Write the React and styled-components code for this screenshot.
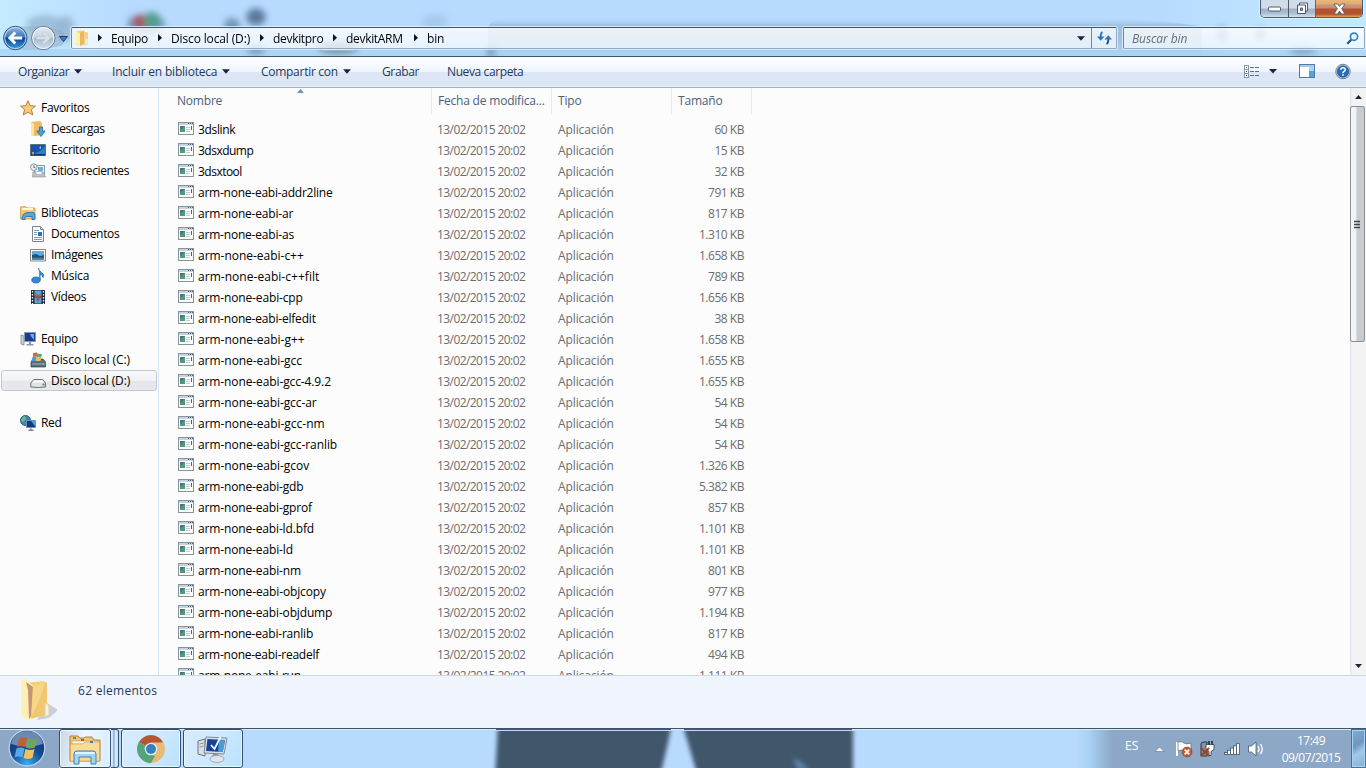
import React from 'react';
import styled, { createGlobalStyle } from 'styled-components';

const Global = createGlobalStyle`
  * { box-sizing: border-box; }
  body { margin: 0; background: #b8daff; overflow: hidden; }
  svg { display: block; flex: none; }
`;

const Screen = styled.div`
  width: 1366px;
  height: 768px;
  display: flex;
  flex-direction: column;
  overflow: hidden;
  font: 12px/21px 'Open Sans', 'Noto Sans', sans-serif;
  letter-spacing: -0.2px;
  color: #000;
  white-space: nowrap;
`;

/* ---------- window frame ---------- */
const Frame = styled.header`
  position: relative;
  height: 57px;
  flex: none;
  display: flex;
  flex-direction: column;
  border-bottom: 1px solid #3f5468;
  background: linear-gradient(90deg, #c4ebff 0, #b8daff 130px, #b8daff 1160px, #bfe6ff 1290px, #c0eaff 100%);
`;
const Backdrop = styled.svg`
  position: absolute;
  left: 0;
  top: 0;
`;
const CaptionBar = styled.div`
  position: relative;
  height: 27px;
  display: flex;
  justify-content: flex-end;
  align-items: flex-start;
  padding-right: 3px;
`;
const Caption = styled.div`
  display: flex;
  height: 18px;
  border: 1px solid #4d5b70;
  border-top: 0;
  border-radius: 0 0 5px 5px;
  overflow: hidden;
  box-shadow: 0 0 0 1px #d9f0ff;
`;
const CaptionButton = styled.div`
  width: ${p => p.$w}px;
  display: flex;
  align-items: center;
  justify-content: center;
  border-left: ${p => (p.$first ? 0 : '1px solid ' + (p.$close ? '#b04a2a' : '#4d5b70'))};
  background: ${p =>
    p.$close
      ? 'linear-gradient(#e9b878 0, #e2ab6c 4px, #c99580 5px, #c08a78 8px, #b4532c 9px, #b4532c 14px, #e2a35f 17px)'
      : 'linear-gradient(#cfdcea 0, #d3dde8 8px, #9fb2c7 9px, #a9bccf 13px, #cfe2f2 17px)'};
`;
const NavBar = styled.div`
  position: relative;
  height: 22px;
  display: flex;
  align-items: center;
`;
const NavButtons = styled.div`
  width: 71px;
  height: 28px;
  flex: none;
`;
const FieldBox = styled.div`
  height: 22px;
  display: flex;
  align-items: center;
  border: 1px solid #8fa9c6;
  border-top-color: #3f5468;
  border-left-color: #71859b;
  border-radius: 2px;
  box-shadow: 0 0 0 1px rgba(225, 242, 255, 0.8);
  background: linear-gradient(rgba(255, 255, 255, 0.8), rgba(244, 250, 255, 0.76));
`;
const Address = styled(FieldBox)`
  width: 1046px;
  padding-left: 3px;
  margin-right: 6px;
`;
const Crumbs = styled.div`
  display: flex;
  flex: 1;
  margin-left: 9px;
`;
const Crumb = styled.div`
  width: ${p => p.$w}px;
  display: flex;
  align-items: center;
  gap: 9px;
  letter-spacing: ${p => p.$ls}px;
`;
const RefreshCell = styled.div`
  width: 25px;
  height: 20px;
  margin-left: 6px;
  border-left: 1px solid #71859b;
  display: flex;
  align-items: center;
  justify-content: center;
`;
const Search = styled(FieldBox)`
  width: 242px;
  padding: 0 5px 0 8px;
  justify-content: space-between;
  font-style: italic;
  color: #66707c;
  letter-spacing: -0.1px;
`;

/* ---------- command bar ---------- */
const Commands = styled.nav`
  height: 31px;
  flex: none;
  display: flex;
  align-items: center;
  padding: 0 15px 1px 18px;
  color: #1e395b;
  border-bottom: 1px solid #9ab2cb;
  box-shadow: inset 0 -1px #e6f1fb;
  background: linear-gradient(#ffffff 0, #eef5ff 15px, #dce6f4 15px, #dce6f4 100%);
`;
const Command = styled.div`
  width: ${p => p.$w}px;
  display: flex;
  align-items: center;
  gap: 5px;
  letter-spacing: ${p => p.$ls}px;
`;
const CommandTools = styled.div`
  margin-left: auto;
  display: flex;
  align-items: center;
`;

/* ---------- body ---------- */
const Body = styled.div`
  height: 587px;
  flex: none;
  display: flex;
  overflow: hidden;
  background: #fcfcfc;
`;
const Sidebar = styled.aside`
  width: 159px;
  flex: none;
  padding: 9px 1px 0;
  border-right: 1px solid #d6e5f5;
`;
const Group = styled.div`
  margin-bottom: 21px;
`;
const Place = styled.div`
  height: 21px;
  display: flex;
  align-items: center;
  gap: 5px;
  padding-left: ${p => (p.$nested ? 28 : 18)}px;
  border: 1px solid ${p => (p.$selected ? '#c3c8d0' : 'transparent')};
  border-radius: 3px;
  background: ${p => (p.$selected ? 'linear-gradient(#f8f8f8, #f1f2f4 50%, #e4e6ec 55%, #e6e8ec)' : 'none')};
  letter-spacing: ${p => p.$ls}px;
`;
const List = styled.main`
  width: 1191px;
  flex: none;
`;
const Columns = styled.div`
  display: grid;
  grid-template-columns: 273px 120px 120px 80px;
`;
const HeadRow = styled(Columns)`
  height: 31px;
  color: #4c607a;
`;
const HeadCell = styled.div`
  position: relative;
  height: 26px;
  padding-left: ${p => p.$pad || 6}px;
  line-height: 26px;
  border-right: 1px solid #e3ecf6;
`;
const SortMark = styled.svg`
  position: absolute;
  left: 138px;
  top: 1px;
`;
const FileRow = styled(Columns)`
  height: 21px;
  color: #6d6d6d;
`;
const FileName = styled.div`
  display: flex;
  gap: 4px;
  padding-left: 19px;
  color: #000;
  letter-spacing: ${p => p.$ls}px;
  svg { margin-top: 3px; }
`;
const DateCell = styled.div`
  padding-left: 5px;
  letter-spacing: -0.57px;
`;
const TypeCell = styled.div`
  padding-left: 6px;
  letter-spacing: -0.1px;
`;
const SizeCell = styled.div`
  padding-right: 8px;
  text-align: right;
  letter-spacing: -0.47px;
`;
const Scroll = styled.div`
  width: 16px;
  display: flex;
  flex-direction: column;
  background: linear-gradient(90deg, #e3e8ee 1px, #f3f3f3 2px);
`;
const ScrollArrow = styled.div`
  height: 18px;
  display: flex;
  align-items: center;
  justify-content: center;
`;
const Thumb = styled.div`
  width: 15px;
  height: 236px;
  border: 1px solid #8b9097;
  border-radius: 2px;
  display: flex;
  align-items: center;
  padding-left: 3px;
  background: linear-gradient(90deg, #f5f5f5 0, #f0f1f2 5px, #c6cbd0 6px, #c8cdd1 100%);
`;
const Track = styled.div`
  flex: 1;
`;
const Details = styled.footer`
  height: 53px;
  flex: none;
  display: flex;
  padding-left: 19px;
  gap: 21px;
  color: #1e395b;
  border-top: 1px solid #cbdaea;
  background: #f0f4fc;
`;
const DetailsText = styled.div`
  padding-top: 4px;
  letter-spacing: 0.28px;
`;

/* ---------- taskbar ---------- */
const Taskbar = styled.div`
  position: relative;
  height: 40px;
  flex: none;
  display: flex;
  border-top: 1px solid #3f5468;
  box-shadow: inset 0 1px #d6ecff;
  background: linear-gradient(90deg, #8da8c6 0, #8da8c6 59px, #b8daff 59px, #b8daff 1076px, #a9d3f5 1088px, #8da8c6 1112px, #8da8c6 100%);
`;
const StartButton = styled.div`
  position: relative;
  width: 59px;
  padding: 0 0 0 8px;
`;
const TaskButton = styled.div`
  position: relative;
  width: ${p => p.$w}px;
  height: 39px;
  margin-right: ${p => p.$gap ?? 2}px;
  display: flex;
  align-items: center;
  justify-content: center;
  border: 1px solid #35506d;
  border-radius: 3px;
  box-shadow: inset 0 0 0 1px #e9f8ff;
  background: ${p =>
    p.$active
      ? 'linear-gradient(100deg, #c9d7e6, #eef6ff 45%, #d7edff)'
      : 'linear-gradient(120deg, #d8ebfc, #cfe8ff 50%, #b9e2fd)'};
`;
const StackEdge = styled.div`
  position: relative;
  width: 8px;
  height: 39px;
  margin-right: 2px;
  border: 1px solid #35506d;
  border-left: 0;
  border-radius: 0 3px 3px 0;
  background: linear-gradient(90deg, #e4f3ff 0, #c3dcf3 2px, #7896b4 3px, #d5ebff 4px, #c5e3fb 100%);
`;
const Tray = styled.div`
  position: relative;
  margin-left: auto;
  display: flex;
  color: #fff;
`;
const Language = styled.div`
  padding-top: 6px;
  width: 22px;
  letter-spacing: 0;
`;
const Clock = styled.div`
  width: 80px;
  padding-top: 3px;
  text-align: center;
  line-height: 17px;
  letter-spacing: -0.5px;
`;
const ShowDesktop = styled.div`
  width: 15px;
  height: 39px;
  border: 1px solid #4c7090;
  box-shadow: inset 0 0 0 1px #a7d3f3;
  background: linear-gradient(145deg, #86abd0, #6e98c2 40%, #a3c8ea 60%, #7fb0d9);
`;

/* ---------- drawings ---------- */
const Down = ({ w = 8, c = '#241e4e' }) => (
  <svg width={w} height="5" viewBox="0 0 8 5"><path d="M0 .3h8L4 4.8z" fill={c} /></svg>
);
const Right = () => (
  <svg width="4" height="8" viewBox="0 0 4 8"><path d="M0 0v7.500L4 3.800z" fill="#111" /></svg>
);

const FrameBackdrop = () => (
  <Backdrop width="1366" height="56">
    <defs>
      <filter id="soft" x="-40%" y="-40%" width="180%" height="180%"><feGaussianBlur stdDeviation="3" /></filter>
      <linearGradient id="band" x1="0" x2="0" y1="0" y2="1">
        <stop offset="0" stopColor="#a9d3f5" stopOpacity="0" /><stop offset=".2" stopColor="#9fc0df" /><stop offset=".5" stopColor="#a0c0de" /><stop offset="1" stopColor="#a9d3f5" />
      </linearGradient>
    </defs>
    <path d="M488 27q5-9 14-9h590q80 2 110 9v29H488z" fill="url(#band)" />
    <path d="M0 49h1366v7H0z" fill="#a9d3f5" opacity=".8" />
    <g filter="url(#soft)">
      <ellipse cx="45" cy="24" rx="19" ry="9" fill="#93b5d2" opacity=".8" />
      <ellipse cx="66" cy="29" rx="9" ry="13" fill="#8dadc8" opacity=".7" />
      <ellipse cx="146" cy="24" rx="19" ry="10" fill="#5f86a2" opacity=".75" />
      <circle cx="140" cy="22" r="7" fill="#a65560" />
      <circle cx="152" cy="20" r="8" fill="#519f8d" />
      <ellipse cx="256" cy="17" rx="10" ry="9" fill="#5c82a8" />
      <circle cx="256" cy="16" r="3" fill="#6b5a66" />
      <ellipse cx="232" cy="25" rx="8" ry="7" fill="#7194b7" />
      <ellipse cx="256" cy="50" rx="9" ry="4" fill="#7194b7" />
      <ellipse cx="338" cy="48" rx="20" ry="6" fill="#7893a6" />
      <ellipse cx="435" cy="22" rx="13" ry="8" fill="#9dc0e0" opacity=".6" />
      <path d="M487 46h8v12h-8z" fill="#7fa3c5" />
      <ellipse cx="1222" cy="34" rx="5" ry="8" fill="#7fa3c5" />
      <ellipse cx="1260" cy="34" rx="5" ry="6" fill="#7fa3c5" />
      <ellipse cx="1303" cy="51" rx="14" ry="4" fill="#84a8c8" />
    </g>
    <path d="M322 49.500h32" stroke="#ded6b0" strokeWidth="2" opacity=".8" />
  </Backdrop>
);

const NavDrawing = () => (
  <svg width="71" height="28" viewBox="0 24 71 28">
    <defs>
      <linearGradient id="bk" x1="0" x2="0" y1="0" y2="1">
        <stop offset="0" stopColor="#9bbbe0" /><stop offset=".45" stopColor="#3c79bd" /><stop offset=".5" stopColor="#0c3d90" /><stop offset="1" stopColor="#3aa4e6" />
      </linearGradient>
      <linearGradient id="fw" x1="0" x2="0" y1="0" y2="1">
        <stop offset="0" stopColor="#e4ebf1" /><stop offset=".48" stopColor="#cbd5df" /><stop offset=".52" stopColor="#aab9c8" /><stop offset="1" stopColor="#d1e1ee" />
      </linearGradient>
    </defs>
    <path d="M14 26.500h30l18 4q6 7 0 15l-18 4H14z" fill="#86a2bd" opacity=".45" />
    <circle cx="15.300" cy="38" r="11.700" fill="url(#bk)" stroke="#31597f" />
    <circle cx="15.300" cy="38" r="10.600" fill="none" stroke="#cce5fb" strokeWidth=".9" />
    <path d="M7.800 38l6.500-6.500 2 2-2.800 2.900h8.700v3.200h-8.700l2.800 2.900-2 2z" fill="#fff" />
    <circle cx="43.300" cy="38" r="11.700" fill="url(#fw)" stroke="#627a91" />
    <circle cx="43.300" cy="38" r="10.600" fill="none" stroke="#eff7ff" />
    <path d="M50.800 38l-6.500-6.500-2 2 2.800 2.900h-8.700v3.200h8.700l-2.800 2.900 2 2z" fill="#d9e1e8" stroke="#b4c1cd" strokeWidth=".6" />
    <path d="M59.500 36.500h8l-4 5z" fill="#3586cd" stroke="#1b3b70" />
  </svg>
);

const FolderSmall = () => (
  <svg width="14" height="17" viewBox="0 0 14 17">
    <path d="M1 1l8-.5 1 1.500 3 .5v12l-8 1-4-1z" fill="#f5d27d" />
    <path d="M1 1l4 2v13l-4-2z" fill="#fff0a8" /><path d="M5 3l4-2v13l-4 2z" fill="#e9b860" />
    <path d="M10.500 9h2v5h-2z" fill="#eaf6ff" />
  </svg>
);

const AppIcon = () => (
  <svg width="16" height="13" viewBox="0 0 16 13">
    <rect x=".5" y=".5" width="15" height="12" fill="#fff" stroke="#8a929c" />
    <path d="M1 1h14v2H1z" fill="#c5d3e1" /><path d="M10 1h1v1h-1zM12 1h1v1h-1zM14 1h1v1h-1z" fill="#42607c" />
    <path d="M2 4h5v6H2z" fill="#4d9b7a" /><path d="M2 4h5L2 8z" fill="#4a7388" />
    <path d="M8 5.500h4M8 7.500h4M8 9.500h4" stroke="#c5ccd1" /><path d="M13.500 4v4" stroke="#4c6070" />
  </svg>
);

const icons = {
  star: <path d="M8 .7l2.100 5 5.300.4-4 3.500 1.400 5.400L8 12.100 3.200 15l1.400-5.400-4-3.500 5.300-.4z" fill="#f7ce75" stroke="#b86d35" strokeWidth=".9" />,
  downloads: <><path d="M1 1l9-1 2 2v12l-7 1-4-1z" fill="#efbc65" /><path d="M1 1l3 2v12l-3-1z" fill="#ffe69a" /><path d="M9.500 6h3v4h2.700L11 15.500 6.800 10h2.700z" fill="#4ba2e3" stroke="#24649f" strokeWidth=".8" /></>,
  desktop: <><path d="M.5 2.500h15v11H.5z" fill="#1d50a8" stroke="#5b7082" /><path d="M5 11q6-1 10-7v8H5z" fill="#2d80cd" /><path d="M1 12h14v1.500H1z" fill="#153463" /><path d="M2 10h2v2.500H2z" fill="#8fb070" /><path d="M9 6l2-2v3z" fill="#a0daf5" /></>,
  recent: <><path d="M4.500 2.500h10v9h-10z" fill="#eef6fb" stroke="#7f98ab" /><path d="M8 4h5v4H8z" fill="#70abd9" /><path d="M3 9h10l2.500 5h-13z" fill="#bbc2c9" stroke="#888f96" strokeWidth=".6" /><path d="M6 8.500h6v3H6z" fill="#f7fbfd" stroke="#9aa8b2" strokeWidth=".6" /><circle cx="3.800" cy="4.200" r="3.300" fill="#eef2f4" stroke="#87939d" /><path d="M3.800 2.400v2l1.600.4" stroke="#2d4c65" fill="none" strokeWidth=".8" /></>,
  libs: <><path d="M.5 2l5-.5 1.500 1.500h8v11H.5z" fill="#f2c878" stroke="#c58a3e" strokeWidth=".7" /><path d="M2 3h11v2H2z" fill="#fff6ce" /><path d="M2 14.500q0-7 6-7h5q2 0 2 3v4h-3v-3H6q-1 0-1 3z" fill="#58a4dc" stroke="#286da7" strokeWidth=".8" /></>,
  docs: <><path d="M2.500.5h8l3 3v12h-11z" fill="#fff" stroke="#7a868f" /><path d="M10.500 .5v3h3" fill="#d7e0e7" stroke="#7a868f" /><path d="M4 4.500h5M4 6.500h3M4 8.500h3M4 11.500h8M4 13.500h8" stroke="#7b9faf" /><path d="M8 6h4v4H8z" fill="#2d70b6" /></>,
  images: <><path d="M.5 2.500h15v11.500H.5z" fill="#fff" stroke="#7d8790" /><path d="M2 4h12v8.500H2z" fill="#5eade3" /><path d="M2 8l4-1 4 2 4-1v4.500H2z" fill="#274f66" /><path d="M2 10.500h12v2H2z" fill="#3b80ad" /></>,
  music: <><path d="M8.500 0q0 3 3 4.500t1.500 5q0-3-3-3.500V12" fill="#3d91d8" stroke="#276ca9" /><ellipse cx="6" cy="12" rx="4.300" ry="3" fill="#2e86d4" stroke="#2169a8" strokeWidth=".7" /></>,
  video: <><path d="M1 1h14v14H1z" fill="#1e2740" /><path d="M4.500 1.500h7v6h-7zM4.500 8.500h7v6h-7z" fill="#53a8dc" /><path d="M4.500 4l4 2 3-2v3.500h-7z" fill="#b5603f" /><path d="M6 8.500h4l-1 4H7z" fill="#a65b45" /><path d="M2.500 2v13M13.500 2v13" stroke="#fff" strokeDasharray="1.500 1.500" strokeWidth="1.300" /></>,
  pc: <><path d="M1 4l3 1v9l-3-1z" fill="#cbd3d8" stroke="#6d7b86" strokeWidth=".7" /><path d="M4.500 1.500h11v9h-11z" fill="#173e94" stroke="#8d9aa5" /><path d="M10 3h4v6q-3-3-4-6z" fill="#65b1e8" /><path d="M9 11h2v2h2.500v1.500h-7V13H9z" fill="#8c99a4" /></>,
  driveC: <><path d="M1 10l2-3h10l2.500 3v5H1z" fill="#5a6d7c" stroke="#304352" strokeWidth=".7" /><path d="M2 12h10" stroke="#a1b2bf" /><path d="M12.500 11h2v2h-2z" fill="#76c494" /><path d="M3 1l4-.5v4L3 5z" fill="#c9693d" /><path d="M7 1.500l5 .5-1 4H6.500z" fill="#57ab84" /><path d="M2.500 5h4l-1 4h-4z" fill="#4f9ad7" /><path d="M6.500 5h5l-1 4h-5z" fill="#eebb64" /></>,
  driveD: <><path d="M.8 10l3-3.500h9l2.700 3.500v4q-7 1-14.700 0z" fill="#dfe3e5" stroke="#6d7478" /><path d="M2 9.500l2-2h8l2 2z" fill="#fafafa" /><path d="M12.500 10.500h2v2h-2z" fill="#529567" /></>,
  net: <><circle cx="5.500" cy="5.500" r="5" fill="#3689bf" stroke="#245c85" /><path d="M2 3q2-2 3-2l1 3-3 3-2-1zM6 6h3v4H6z" fill="#75b982" /><path d="M6.500 5.500h9v7h-9z" fill="#12388c" stroke="#7890a6" /><path d="M11 6h4v5z" fill="#4aa3e1" /><path d="M10.500 13h1v1.500h2V16H8.500v-1.500h2z" fill="#75838f" /></>,
};
const SideIcon = ({ name }) => <svg width="16" height="16" viewBox="0 0 16 16">{icons[name]}</svg>;

const BigFolder = () => (
  <svg width="38" height="48" viewBox="0 -2 38 48">
    <path d="M28 25l11 7-9 8-12 2z" fill="#b7c1d1" opacity=".7" />
    <path d="M6 5l19-2 3 3v30L12 41 5 36z" fill="#f6d078" />
    <path d="M2 2l5-1 8 8v28l-5 6-8-6z" fill="#fff0b6" />
    <path d="M7 4l7 5v27l-4 5-1-29z" fill="#c49570" />
    <path d="M14 8l12-4q2 0 2 3v30l-16 3z" fill="#f1c673" />
    <path d="M14 8l12-4q-4 16-14 36z" fill="#f9db93" opacity=".7" />
    <path d="M26 25q4 0 4 5v7l-4 2z" fill="#e9f1f8" stroke="#f1cf82" />
  </svg>
);

const TaskWallpaper = () => (
  <Backdrop width="1366" height="39">
    <defs><filter id="edge"><feGaussianBlur stdDeviation="2" /></filter><clipPath id="bar"><path d="M0 2h1366v37H0z" /></clipPath></defs>
    <path d="M496 0h175M684 0h168" stroke="#241e55" strokeWidth="1.500" />
    <g clipPath="url(#bar)"><g filter="url(#edge)" fill="#41576b">
      <path d="M498-6h174l-4 20-8 34H495z" /><path d="M682-6h171v54H698l-10-34z" />
      <path d="M793 28l16 12h-11z" fill="#5f88af" />
    </g></g>
  </Backdrop>
);

const StartOrb = () => (
  <svg width="38" height="39" viewBox="0 0 38 39">
    <defs><radialGradient id="orb" cx=".5" cy=".95" r=".9"><stop offset="0" stopColor="#38aef0" /><stop offset=".5" stopColor="#164b94" /><stop offset="1" stopColor="#122c63" /></radialGradient></defs>
    <circle cx="19" cy="19" r="17.800" fill="url(#orb)" stroke="#b9d5ef" strokeWidth="1.200" />
    <path d="M3 15Q6 2 19 2t16 13q-16 5-32 0z" fill="#9db8d4" opacity=".65" />
    <path d="M11 10q4-3 8-1l-2 9q-4-2-8 0z" fill="#c65f2c" /><path d="M20 9.500q4 2 9 0l-2 9q-5 2-9 0z" fill="#6ba958" />
    <path d="M8.500 19.500q4-2 8 0l-2 9q-4-2-8 0z" fill="#55a9e8" /><path d="M17.500 20q5 2 9 0l-2 9q-5 2-9 0z" fill="#f0c05f" />
  </svg>
);
const ExplorerIcon = () => (
  <svg width="34" height="32" viewBox="0 0 34 32">
    <path d="M2 3h8l2 2h4l1-1h7l2 3h6v21H2z" fill="#efc778" stroke="#b77e3b" />
    <path d="M4 8h26v3H4z" fill="#fff9dd" stroke="#cf9c54" strokeWidth=".6" /><path d="M2.500 11H15l2-2h14.500v19h-29z" fill="#f9dc98" stroke="#d5a057" strokeWidth=".7" />
    <path d="M5 4h3v2H5z" fill="#4f9c6c" /><path d="M13 6h3v2h-3z" fill="#b7532f" /><path d="M22 8h3v2h-3z" fill="#3a83c7" />
    <path d="M6 31V21q0-3 3-3h16q3 0 3 3v10h-5v-7H11v7z" fill="#9fd6f6" stroke="#3c82b5" /><path d="M7 20h20" stroke="#e0f4ff" strokeWidth="2" />
  </svg>
);
const ChromeIcon = () => (
  <svg width="28" height="28" viewBox="0 0 28 28">
    <path d="M14 14L1.900 7A14 14 0 0 1 26.100 7z" fill="#b75631" /><path d="M14 14L26.100 7A14 14 0 0 1 14 28z" fill="#e9bb70" />
    <path d="M14 14v14A14 14 0 0 1 1.900 7z" fill="#57a47c" /><path d="M14 7.600h12.400q2.400 7-1.500 12L19.500 17z" fill="#e9bb70" /><path d="M8.500 17L1.900 7Q-2 17 5 24.500 9 28 14 28l4-7z" fill="#57a47c" />
    <circle cx="14" cy="14" r="6.300" fill="#e3edf3" /><circle cx="14" cy="14" r="5" fill="#3480c0" />
  </svg>
);
const ComputerIcon = () => (
  <svg width="32" height="30" viewBox="0 0 32 30">
    <path d="M1 7l7-2v17l-7-2z" fill="#dce0e3" stroke="#677480" /><path d="M2.500 10l4-1M2.500 13l4-1" stroke="#8593a0" />
    <path d="M9 3l21 1-3 16-20-1z" fill="#d7e0e7" stroke="#7d8995" /><path d="M10.500 5l17.500 1-2.300 12-16.700-1z" fill="#16429a" /><path d="M22 6l6 .3L25.700 18 21 17.700z" fill="#4c9bd9" />
    <path d="M14 11l3.500 4 6-12" fill="none" stroke="#f4f9ff" strokeWidth="1.800" /><path d="M16 20h5l1 3h-7z" fill="#87939e" /><ellipse cx="20" cy="25" rx="7" ry="3.500" fill="#dfe5e9" stroke="#a0acb5" />
  </svg>
);
const TrayIcons = () => (
  <svg width="124" height="39" viewBox="1147 729 124 39">
    <path d="M1155 751.500l4.500-4.500 4.500 4.500z" fill="#fff" stroke="#60758d" strokeWidth=".6" />
    <path d="M1177 742v14" stroke="#fff" strokeWidth="2" /><path d="M1178 742q4-1 6 1t7 0v8q-5 2-7 0t-6 0z" fill="#fff" stroke="#52677e" strokeWidth=".7" />
    <circle cx="1187" cy="752" r="5" fill="#b85b30" stroke="#8b3d1e" strokeWidth=".5" /><path d="M1184.700 749.700l4.600 4.600m0-4.600l-4.600 4.600" stroke="#fff" strokeWidth="1.700" />
    <path d="M1201 744q0-2 3-2h3v14h-6z" fill="#8594a4" stroke="#27374a" /><path d="M1209 741v4M1212 741v4" stroke="#182538" strokeWidth="1.500" /><path d="M1206 744.500h8v5l-3 2v4h-2v-4l-3-2z" fill="#fff" stroke="#27374a" strokeWidth=".8" /><path d="M1201 748l8 8m0-8l-8 8" stroke="#a43f24" strokeWidth="2" />
    {[0, 1, 2, 3, 4].map(i => <rect key={i} x={1224.500 + i * 3} y={752.500 - i * 2.200} width="3" height={2 + i * 2.200} fill="#fff" stroke="#3f546a" strokeWidth=".8" />)}
    <path d="M1248.500 746h3l4.500-4v14l-4.500-4h-3z" fill="#fff" stroke="#42566b" strokeWidth=".8" /><path d="M1258 746q2 3 0 6M1260.500 744q3.500 5 0 10" fill="none" stroke="#fff" strokeWidth="1.300" />
  </svg>
);

/* ---------- data ---------- */
// The last number of an entry is the tracking correction of its label, in px over the whole word.
const tracking = (text, px = 0) => -0.2 + px / text.length;

const crumbs = [['Equipo', 60, -1], ['Disco local (D:)', 102, 1], ['devkitpro', 73, -1], ['devkitARM', 81, -1], ['bin', 40, 0]];
const commands = [
  ['Organizar', 94, true, -2], ['Incluir en biblioteca', 149, true, 0], ['Compartir con', 121, true, -1],
  ['Grabar', 65, false, -1], ['Nueva carpeta', 90, false, -2.5],
];
const places = [
  [['star', 'Favoritos', -1], ['downloads', 'Descargas', -2], ['desktop', 'Escritorio', -2], ['recent', 'Sitios recientes', -3]],
  [['libs', 'Bibliotecas', -1], ['docs', 'Documentos', -1], ['images', 'Imágenes', -1], ['music', 'Música', 0], ['video', 'Vídeos', -1]],
  [['pc', 'Equipo', -1], ['driveC', 'Disco local (C:)', 2], ['driveD', 'Disco local (D:)', 1]],
  [['net', 'Red', -0.5]],
];
const files = [
  ['3dslink', '60', -1], ['3dsxdump', '15', -2.5], ['3dsxtool', '32', -2.5], ['arm-none-eabi-addr2line', '791', -1], ['arm-none-eabi-ar', '817', 0],
  ['arm-none-eabi-as', '1.310', 0], ['arm-none-eabi-c++', '1.658', 3], ['arm-none-eabi-c++filt', '789', 5], ['arm-none-eabi-cpp', '1.656', 1],
  ['arm-none-eabi-elfedit', '38', 0], ['arm-none-eabi-g++', '1.658', 3], ['arm-none-eabi-gcc', '1.655', 2.5], ['arm-none-eabi-gcc-4.9.2', '1.655', 2],
  ['arm-none-eabi-gcc-ar', '54', 2.5], ['arm-none-eabi-gcc-nm', '54', 3.5], ['arm-none-eabi-gcc-ranlib', '54', 3], ['arm-none-eabi-gcov', '1.326', 2.5],
  ['arm-none-eabi-gdb', '5.382', 1], ['arm-none-eabi-gprof', '857', 1], ['arm-none-eabi-ld.bfd', '1.101', 1], ['arm-none-eabi-ld', '1.101', 1],
  ['arm-none-eabi-nm', '801', 1], ['arm-none-eabi-objcopy', '977', 1.5], ['arm-none-eabi-objdump', '1.194', 1], ['arm-none-eabi-ranlib', '817', 0],
  ['arm-none-eabi-readelf', '494', -1], ['arm-none-eabi-run', '1.111', 0],
];

export default function App() {
  return (
    <Screen>
      <Global />
      <Frame>
        <FrameBackdrop />
        <CaptionBar>
          <Caption>
            <CaptionButton $w={27} $first>
              <svg width="13" height="6"><rect x=".5" y="1" width="12" height="4" rx="1" fill="#fff" stroke="#4d5b70" /></svg>
            </CaptionButton>
            <CaptionButton $w={27}>
              <svg width="13" height="13"><path d="M3.500 1h8v8h-8z" fill="#fff" stroke="#4d5b70" /><path d="M1.500 3h8v8.500h-8z" fill="#fff" stroke="#4d5b70" /><path d="M4.500 6h2v2.500h-2z" fill="#9fb2c7" stroke="#4d5b70" /></svg>
            </CaptionButton>
            <CaptionButton $w={47} $close>
              <svg width="13" height="12"><path d="M1 1h3.500l2 2.500L8.500 1H12L8.700 5.700 12 11H8.500l-2-3-2 3H1l3.300-5.300z" fill="#fff" stroke="#55606f" strokeWidth=".9" /></svg>
            </CaptionButton>
          </Caption>
        </CaptionBar>
        <NavBar>
          <NavButtons><NavDrawing /></NavButtons>
          <Address>
            <FolderSmall />
            <Crumbs>
              {crumbs.map(([t, w, px]) => <Crumb key={t} $w={w} $ls={tracking(t, px)}><Right />{t}</Crumb>)}
            </Crumbs>
            <Down />
            <RefreshCell>
              <svg width="15" height="14" viewBox="0 0 15 14"><path d="M5.500 1Q3.500 2 3.700 6" fill="none" stroke="#2b77be" strokeWidth="1.800" /><path d="M0 5.500h7.500L3.700 9.800z" fill="#2b77be" /><path d="M9.500 13q2-1 1.800-5" fill="none" stroke="#164a98" strokeWidth="1.800" /><path d="M7.500 8.500H15L11.300 4.200z" fill="#2b77be" /></svg>
            </RefreshCell>
          </Address>
          <Search>
            Buscar bin
            <svg width="13" height="13" viewBox="0 0 13 13"><circle cx="8" cy="4.700" r="3.600" fill="#eef8ff" stroke="#3583c6" strokeWidth="1.700" /><path d="M5.200 7.700L1.300 11.700" stroke="#22508b" strokeWidth="2.200" /></svg>
          </Search>
        </NavBar>
      </Frame>
      <Commands>
        {commands.map(([t, w, menu, px]) => <Command key={t} $w={w} $ls={tracking(t, px)}>{t}{menu && <Down />}</Command>)}
        <CommandTools>
          <svg width="15" height="13" viewBox="0 0 15 13">
            {[0, 4, 8].map(y => <g key={y}><rect x=".5" y={y + 0.5} width="4" height="4" fill="#fff" stroke="#8796a8" /><path d={`M2 ${y + 2.5}h1`} stroke="#1b4f99" /><path d={`M6 ${y + 2.5}h4M11 ${y + 2.5}h4`} stroke="#5d6e83" /></g>)}
          </svg>
          <svg width="39" height="5" viewBox="0 0 39 5"><path d="M10 0h8l-4 4.500z" fill="#241e4e" /></svg>
          <svg width="37" height="15" viewBox="-1 0 37 15"><rect x=".5" y=".5" width="15" height="13" fill="#fff" stroke="#4f7ba6" /><path d="M1 1h14v2H1z" fill="#a7cbe8" /><path d="M10 3h5v10h-5z" fill="#54a0d5" /><path d="M10 3h5v4h-5z" fill="#a9d7f2" /></svg>
          <svg width="16" height="17" viewBox="0 0 17 17"><circle cx="8.500" cy="8.500" r="7.700" fill="#dce5ed" stroke="#6e7985" /><circle cx="8.500" cy="8.500" r="6.200" fill="#246dbb" stroke="#1d4f8b" strokeWidth=".7" /><path d="M6.200 6.600q.2-2.100 2.400-2.100t2.300 1.900q0 1.300-1.300 2T8.400 10.200M8.400 11.500v1.500" fill="none" stroke="#fff" strokeWidth="1.700" /></svg>
        </CommandTools>
      </Commands>
      <Body>
        <Sidebar>
          {places.map((g, i) => (
            <Group key={i}>
              {g.map(([ic, t, px], j) => (
                <Place key={t} $nested={j > 0} $selected={ic === 'driveD'} $ls={tracking(t, px)}><SideIcon name={ic} />{t}</Place>
              ))}
            </Group>
          ))}
        </Sidebar>
        <List>
          <HeadRow>
            <HeadCell $pad={18}>Nombre<SortMark width="7" height="4"><path d="M0 4h7L3.500 0z" fill="#6d93b8" /></SortMark></HeadCell>
            <HeadCell>Fecha de modifica...</HeadCell>
            <HeadCell>Tipo</HeadCell>
            <HeadCell>Tamaño</HeadCell>
          </HeadRow>
          {files.map(([n, s, px]) => (
            <FileRow key={n}>
              <FileName $ls={tracking(n, px)}><AppIcon />{n}</FileName>
              <DateCell>13/02/2015 20:02</DateCell>
              <TypeCell>Aplicación</TypeCell>
              <SizeCell>{s} KB</SizeCell>
            </FileRow>
          ))}
        </List>
        <Scroll>
          <ScrollArrow><svg width="7" height="4"><path d="M0 4h7L3.500 0z" fill="#222238" /></svg></ScrollArrow>
          <Thumb><svg width="7" height="9"><path d="M0 1.500h6M0 4.500h6M0 7.500h6" stroke="#3f4455" strokeWidth="1.500" /></svg></Thumb>
          <Track />
          <ScrollArrow><svg width="7" height="4"><path d="M0 0h7L3.500 4z" fill="#222238" /></svg></ScrollArrow>
        </Scroll>
      </Body>
      <Details><BigFolder /><DetailsText>62 elementos</DetailsText></Details>
      <Taskbar>
        <TaskWallpaper />
        <StartButton><StartOrb /></StartButton>
        <TaskButton $w={52} $active $gap={0}><ExplorerIcon /></TaskButton>
        <StackEdge />
        <TaskButton $w={60}><ChromeIcon /></TaskButton>
        <TaskButton $w={60}><ComputerIcon /></TaskButton>
        <Tray>
          <Language>ES</Language>
          <TrayIcons />
          <Clock>17:49<br />09/07/2015</Clock>
          <ShowDesktop />
        </Tray>
      </Taskbar>
    </Screen>
  );
}
